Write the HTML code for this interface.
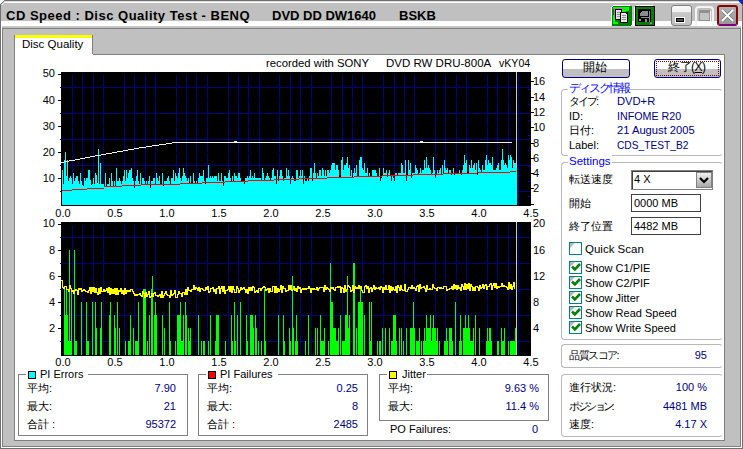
<!DOCTYPE html>
<html><head><meta charset="utf-8">
<style>
*{margin:0;padding:0;box-sizing:border-box}
html,body{width:743px;height:449px;overflow:hidden;background:#fff}
body{position:relative;font-family:"Liberation Sans",sans-serif;font-size:11px;color:#000}
.a{position:absolute}
.t{position:absolute;white-space:nowrap;line-height:13px}
.tb{position:absolute;white-space:nowrap;font-weight:bold;font-size:13px;line-height:15px;top:8px}
.grp{position:absolute;border:1px solid #b8b8b8;border-right-color:transparent;border-radius:4px}
.gbox{position:absolute;border:1px solid #808080}
.gt{position:absolute;background:#fff;padding:0 1px;color:#0000ff;line-height:13px;white-space:nowrap;font-size:11.5px}
.lab{position:absolute;white-space:nowrap;line-height:13px}
.val{position:absolute;white-space:nowrap;line-height:13px;color:#000080}
.r{text-align:right}
.chk{position:absolute;width:13px;height:13px;border:1px solid #008080;background:#fff;overflow:hidden}
.chk:before{content:"";position:absolute;left:0;top:0;border-style:solid;border-width:5px 5px 0 0;border-color:#b8b8b8 transparent transparent transparent}
.chk svg{position:absolute;left:1px;top:1px}
.txtbox{position:absolute;border:1px solid #404040;background:#fff;line-height:16px;padding-left:2px}
svg{position:absolute;display:block}
.btn{position:absolute;border:1px solid #00007f;border-radius:3px;background:linear-gradient(#fff 0,#fff 50%,#c0c0c0 52%,#c0c0c0 100%)}
</style></head><body>
<!-- window frame -->
<div class="a" style="left:0;top:0;width:743px;height:449px;background:#c0c0c0;border:1px solid #707070;clip-path:polygon(5px 0,738px 0,743px 5px,743px 449px,0 449px,0 5px)"></div>
<div class="a" style="left:4px;top:1px;width:735px;height:1px;background:#dcdcdc"></div><div class="a" style="left:4px;top:2px;width:735px;height:1px;background:#fff"></div>
<svg style="left:0;top:0" width="743" height="8" viewBox="0 0 743 8" shape-rendering="crispEdges"><path d="M0 5L5 0" stroke="#707070" stroke-width="1.4"/><path d="M738 0L743 5" stroke="#707070" stroke-width="1.4"/><path d="M2 5L5 2" stroke="#f4f4f4" stroke-width="1.4"/></svg>
<svg style="left:737px;top:0" width="6" height="6" viewBox="0 0 6 6"><path d="M1 0H6V5Z" fill="#0020d0"/></svg>
<!-- white strip -->
<div class="a" style="left:1px;top:21px;width:741px;height:5px;background:#fff"></div>
<div class="a" style="left:1px;top:26px;width:741px;height:1px;background:#cacaca"></div>
<!-- client frame -->
<div class="a" style="left:1px;top:26px;width:741px;height:422px;border-left:1px solid #fff;border-right:1px solid #fff;border-bottom:1px solid #fff"></div>
<div class="a" style="left:2px;top:28px;width:739px;height:419px;border:1px solid #808080;background:#c0c0c0"></div>

<div class="tb" style="left:6px;letter-spacing:0.5px">CD Speed : Disc Quality Test - BENQ</div>
<div class="tb" style="left:272px">DVD DD DW1640</div>
<div class="tb" style="left:399px">BSKB</div>

<!-- title icons -->
<svg style="left:611px;top:5px" width="21" height="21" viewBox="0 0 21 21" shape-rendering="crispEdges">
<path d="M2 0h17v1h-17zM0 2h1v17h-1zM1 1h1v1h-1z" fill="#fff"/>
<rect x="1" y="1" width="20" height="20" rx="2" fill="#008000"/>
<path d="M2 2h16v4h-3v2h-2v2h-9zM2 10h2v7h3v2h-5z" fill="#00ff00"/>
<path d="M3 3h11v1h-10v9h-1z" fill="#a080a0"/>
<path d="M4 4h6l1 1v10h-7z" fill="#000"/><path d="M5 5h5v9h-5z" fill="#e0e0e0"/>
<path d="M6 7h3M6 9h3M6 11h3" stroke="#909090" stroke-width="1"/>
<path d="M9 7h7l1 1v10h-8z" fill="#000"/><path d="M10 8h5v1h1v8h-6z" fill="#e8e8e8"/>
<path d="M11 10.5h4M11 12.5h4M11 14.5h4" stroke="#909090" stroke-width="1"/>
</svg>
<svg style="left:634px;top:5px" width="21" height="21" viewBox="0 0 21 21" shape-rendering="crispEdges">
<path d="M2 0h17v1h-17zM0 2h1v17h-1z" fill="#fff"/>
<rect x="1" y="1" width="20" height="20" rx="1" fill="#000"/>
<rect x="2" y="2" width="18" height="18" fill="#008000"/>
<rect x="4" y="4" width="13" height="13" fill="#000"/>
<path d="M8 6h6v5h-8v-3z" fill="#8c8c8c"/>
<path d="M7 12h8v1h-8z" fill="#8c8c8c"/><path d="M15 6h1v11h-1z" fill="#8c8c8c"/>
<path d="M5 14h2v2h-2zM11 14h2v3h-2z" fill="#8c8c8c"/><path d="M16 17h2v2h-2z" fill="#8c8c8c"/>
</svg>
<!-- min/max/close -->
<div class="a" style="left:671px;top:5px;width:21px;height:21px;border:1px solid #808080;border-radius:3px;background:linear-gradient(#f8f8f8 0,#f0f0f0 30%,#c8c8c8 35%,#c0c0c0 100%)"></div>
<div class="a" style="left:676px;top:18px;width:8px;height:4px;background:#505050;border:1px solid #000;box-shadow:0 0 0 1px #fff"></div>
<div class="a" style="left:695px;top:6px;width:19px;height:20px;border:2px solid #f4f4f4;border-radius:4px 4px 0 0;border-bottom:none"></div>
<div class="a" style="left:699px;top:10px;width:11px;height:11px;border:1px solid #909090;border-top-width:3px;background:#c4c4c4;box-shadow:1px 1px 0 #fff"></div>
<div class="a" style="left:717px;top:5px;width:21px;height:21px;border:2px solid #8b0000;border-bottom-color:#800080;border-radius:3px;background:linear-gradient(#b0b0b0 0,#999 100%)"></div>
<svg style="left:719px;top:7px" width="17" height="17" viewBox="0 0 17 17"><path d="M3.5 3.5L13.5 13.5M13.5 3.5L3.5 13.5" stroke="#333" stroke-width="2.8"/><path d="M3 3L14 14M14 3L3 14" stroke="#fff" stroke-width="2.2"/></svg>

<!-- tab -->
<div class="a" style="left:14px;top:35px;width:79px;height:20px;background:#fff;border-right:1px solid #808080;border-left:1px solid #808080"></div>
<div class="a" style="left:15px;top:35px;width:77px;height:3px;background:#ffff00"></div>
<div class="t" style="left:22px;top:38px;font-size:11.5px">Disc Quality</div>
<!-- tab content -->
<div class="a" style="left:14px;top:54px;width:711px;height:387px;background:#fff;border:1px solid #808080;border-top:none"></div>
<div class="a" style="left:93px;top:54px;width:632px;height:1px;background:#808080"></div>

<div class="t" style="left:266px;top:57px;font-size:11.3px">recorded with SONY</div>
<div class="t" style="left:386px;top:57px;font-size:11.5px">DVD RW DRU-800A</div>
<div class="t" style="left:499px;top:57px;font-size:10.6px">vKY04</div>

<svg class="a" style="left:0;top:0" width="743" height="449" viewBox="0 0 743 449"><rect x="61" y="72" width="470" height="133" fill="#000"/><path d="M72.5 74V205 M82.5 74V205 M93.5 74V205 M103.5 74V205 M124.5 74V205 M134.5 74V205 M145.5 74V205 M155.5 74V205 M176.5 74V205 M186.5 74V205 M196.5 74V205 M207.5 74V205 M228.5 74V205 M238.5 74V205 M248.5 74V205 M259.5 74V205 M279.5 74V205 M290.5 74V205 M300.5 74V205 M311.5 74V205 M331.5 74V205 M342.5 74V205 M352.5 74V205 M362.5 74V205 M383.5 74V205 M394.5 74V205 M404.5 74V205 M414.5 74V205 M435.5 74V205 M445.5 74V205 M456.5 74V205 M466.5 74V205 M487.5 74V205 M497.5 74V205 M508.5 74V205 M518.5 74V205 M60 191.5H531 M60 165.5H531 M60 139.5H531 M60 113.5H531 M60 87.5H531" stroke="#000080" stroke-width="1" fill="none"/><path d="M61 178.5H531 M61 152.5H531 M61 126.5H531 M61 100.5H531 M61 74.5H531" stroke="#000" stroke-width="1" fill="none"/><rect x="516" y="72" width="1" height="133" fill="#c8c8c8"/><path d="M62 205V170H63V184H64V160H65V152H66V176H67V160H68V181H69V178H70V176H71V178H72V184H73V173H74V181H75V178H76V176H77V176H78V181H79V184H80V173H81V181H82V185H83V186H84V178H85V181H86V178H87V178H88V170H89V170H90V180H91V185H92V184H93V178H94V184H95V173H96V175H97V183H98V149H99V184H100V163H101V184H102V184H103V184H104V186H105V173H106V186H107V184H108V184H109V178H110V186H111V173H112V181H113V186H114V181H115V186H116V168H117V181H118V181H119V178H120V181H121V184H122V181H123V176H124V170H125V181H126V170H127V178H128V173H129V170H130V170H131V168H132V178H133V181H134V188H135V181H136V176H137V170H138V181H139V184H140V173H141V185H142V178H143V178H144V181H145V184H146V181H147V184H148V181H149V176H150V188H151V181H152V181H153V178H154V178H155V184H156V173H157V178H158V181H159V176H160V185H161V185H162V173H163V186H164V181H165V181H166V181H167V178H168V176H169V181H170V184H171V178H172V178H173V170H174V181H175V173H176V176H177V178H178V173H179V168H180V178H181V181H182V176H183V168H184V173H185V176H186V178H187V181H188V178H189V184H190V176H191V184H192V184H193V173H194V181H195V184H196V181H197V184H198V178H199V173H200V176H201V176H202V176H203V170H204V181H205V184H206V178H207V178H208V165H209V178H210V176H211V178H212V176H213V178H214V176H215V176H216V176H217V181H218V173H219V181H220V181H221V173H222V181H223V186H224V176H225V176H226V178H227V178H228V173H229V170H230V178H231V181H232V176H233V181H234V173H235V176H236V176H237V178H238V173H239V173H240V178H241V181H242V181H243V181H244V184H245V178H246V178H247V176H248V178H249V176H250V170H251V178H252V176H253V178H254V173H255V178H256V178H257V178H258V178H259V178H260V178H261V181H262V168H263V173H264V181H265V178H266V176H267V173H268V176H269V178H270V181H271V178H272V170H273V168H274V176H275V176H276V184H277V170H278V181H279V176H280V170H281V170H282V176H283V181H284V178H285V178H286V168H287V176H288V170H289V176H290V184H291V178H292V176H293V178H294V181H295V181H296V170H297V170H298V178H299V176H300V170H301V176H302V170H303V184H304V176H305V181H306V181H307V178H308V181H309V176H310V168H311V168H312V181H313V173H314V163H315V173H316V178H317V173H318V176H319V170H320V170H321V176H322V168H323V170H324V176H325V170H326V176H327V170H328V170H329V173H330V170H331V165H332V163H333V163H334V163H335V170H336V165H337V165H338V170H339V177H340V177H341V160H342V157H343V170H344V165H345V165H346V163H347V157H348V168H349V165H350V176H351V170H352V177H353V173H354V168H355V173H356V165H357V177H358V177H359V160H360V157H361V157H362V168H363V170H364V163H365V173H366V173H367V168H368V176H369V173H370V177H371V177H372V170H373V170H374V170H375V170H376V173H377V176H378V177H379V168H380V181H381V178H382V176H383V168H384V173H385V173H386V170H387V177H388V173H389V170H390V176H391V181H392V176H393V178H394V181H395V173H396V173H397V175H398V173H399V173H400V173H401V163H402V165H403V173H404V173H405V160H406V181H407V175H408V160H409V170H410V163H411V178H412V173H413V173H414V173H415V165H416V168H417V170H418V175H419V173H420V168H421V173H422V170H423V170H424V160H425V168H426V157H427V168H428V165H429V168H430V170H431V175H432V173H433V157H434V170H435V178H436V175H437V170H438V173H439V170H440V168H441V175H442V165H443V173H444V160H445V168H446V170H447V168H448V173H449V170H450V170H451V175H452V173H453V168H454V175H455V173H456V173H457V173H458V173H459V170H460V173H461V175H462V170H463V165H464V155H465V163H466V160H467V173H468V173H469V165H470V168H471V160H472V168H473V165H474V163H475V170H476V163H477V175H478V160H479V168H480V170H481V173H482V165H483V170H484V170H485V160H486V155H487V165H488V160H489V163H490V163H491V165H492V157H493V170H494V170H495V170H496V168H497V165H498V163H499V170H500V170H501V160H502V149H503V160H504V165H505V163H506V165H507V168H508V155H509V160H510V155H511V157H512V168H513V160H514V163H515V163H516V168H517V205Z" fill="#00ffff"/><path d="M62 190H72v1H62ZM72 189H87v1H72ZM87 188H104v1H87ZM104 186H122v1H104ZM122 185H141v1H122ZM141 184H180v1H141ZM180 183H202v1H180ZM202 182H225v1H202ZM225 181H248v1H225ZM248 180H274v1H248ZM274 179H299v1H274ZM299 178H327v1H299ZM327 177H354v1H327ZM354 176H382v1H354ZM382 175H413v1H382ZM413 174H443v1H413ZM443 173H477v1H443ZM477 172H510v1H477ZM510 171H516v1H510Z" fill="#ff0000"/><path d="M61 162h1v1h-1ZM62 162h1v1h-1ZM63 162h1v1h-1ZM64 161h1v1h-1ZM65 161h1v1h-1ZM66 161h1v1h-1ZM67 161h1v1h-1ZM68 161h1v1h-1ZM69 160h1v1h-1ZM70 160h1v1h-1ZM71 160h1v1h-1ZM72 160h1v1h-1ZM73 160h1v1h-1ZM74 160h1v1h-1ZM75 159h1v1h-1ZM76 159h1v1h-1ZM77 159h1v1h-1ZM78 159h1v1h-1ZM79 159h1v1h-1ZM80 158h1v1h-1ZM81 158h1v1h-1ZM82 158h1v1h-1ZM83 158h1v1h-1ZM84 158h1v1h-1ZM85 157h1v1h-1ZM86 157h1v1h-1ZM87 157h1v1h-1ZM88 157h1v1h-1ZM89 157h1v1h-1ZM90 156h1v1h-1ZM91 156h1v1h-1ZM92 156h1v1h-1ZM93 156h1v1h-1ZM94 156h1v1h-1ZM95 155h1v1h-1ZM96 155h1v1h-1ZM97 155h1v1h-1ZM98 155h1v1h-1ZM99 155h1v1h-1ZM100 155h1v1h-1ZM101 154h1v1h-1ZM102 154h1v1h-1ZM103 154h1v1h-1ZM104 154h1v1h-1ZM105 154h1v1h-1ZM106 153h1v1h-1ZM107 153h1v1h-1ZM108 153h1v1h-1ZM109 153h1v1h-1ZM110 153h1v1h-1ZM111 153h1v1h-1ZM112 152h1v1h-1ZM113 152h1v1h-1ZM114 152h1v1h-1ZM115 152h1v1h-1ZM116 152h1v1h-1ZM117 151h1v1h-1ZM118 151h1v1h-1ZM119 151h1v1h-1ZM120 151h1v1h-1ZM121 151h1v1h-1ZM122 151h1v1h-1ZM123 150h1v1h-1ZM124 150h1v1h-1ZM125 150h1v1h-1ZM126 150h1v1h-1ZM127 150h1v1h-1ZM128 149h1v1h-1ZM129 149h1v1h-1ZM130 149h1v1h-1ZM131 149h1v1h-1ZM132 149h1v1h-1ZM133 149h1v1h-1ZM134 148h1v1h-1ZM135 148h1v1h-1ZM136 148h1v1h-1ZM137 148h1v1h-1ZM138 148h1v1h-1ZM139 147h1v1h-1ZM140 147h1v1h-1ZM141 147h1v1h-1ZM142 147h1v1h-1ZM143 147h1v1h-1ZM144 147h1v1h-1ZM145 147h1v1h-1ZM146 146h1v1h-1ZM147 146h1v1h-1ZM148 146h1v1h-1ZM149 146h1v1h-1ZM150 146h1v1h-1ZM151 146h1v1h-1ZM152 145h1v1h-1ZM153 145h1v1h-1ZM154 145h1v1h-1ZM155 145h1v1h-1ZM156 145h1v1h-1ZM157 145h1v1h-1ZM158 145h1v1h-1ZM159 144h1v1h-1ZM160 144h1v1h-1ZM161 144h1v1h-1ZM162 144h1v1h-1ZM163 144h1v1h-1ZM164 144h1v1h-1ZM165 144h1v1h-1ZM166 143h1v1h-1ZM167 143h1v1h-1ZM168 143h1v1h-1ZM169 143h1v1h-1ZM170 143h1v1h-1ZM171 143h1v1h-1ZM172 142h1v1h-1ZM173 142h1v1h-1ZM174 142h1v1h-1ZM175 142h1v1h-1ZM176 142h1v1h-1ZM177 142h1v1h-1ZM178 142h1v1h-1ZM179 142h1v1h-1ZM180 142h1v1h-1ZM181 142h1v1h-1ZM182 142h1v1h-1ZM183 142h1v1h-1ZM184 142h1v1h-1ZM185 142h1v1h-1ZM186 142h1v1h-1ZM187 142h1v1h-1ZM188 142h1v1h-1ZM189 142h1v1h-1ZM190 142h1v1h-1ZM191 142h1v1h-1ZM192 142h1v1h-1ZM193 142h1v1h-1ZM194 142h1v1h-1ZM195 142h1v1h-1ZM196 142h1v1h-1ZM197 142h1v1h-1ZM198 142h1v1h-1ZM199 142h1v1h-1ZM200 142h1v1h-1ZM201 142h1v1h-1ZM202 142h1v1h-1ZM203 142h1v1h-1ZM204 142h1v1h-1ZM205 142h1v1h-1ZM206 142h1v1h-1ZM207 142h1v1h-1ZM208 142h1v1h-1ZM209 142h1v1h-1ZM210 142h1v1h-1ZM211 142h1v1h-1ZM212 142h1v1h-1ZM213 142h1v1h-1ZM214 142h1v1h-1ZM215 142h1v1h-1ZM216 142h1v1h-1ZM217 142h1v1h-1ZM218 142h1v1h-1ZM219 142h1v1h-1ZM220 142h1v1h-1ZM221 142h1v1h-1ZM222 142h1v1h-1ZM223 142h1v1h-1ZM224 142h1v1h-1ZM225 142h1v1h-1ZM226 142h1v1h-1ZM227 142h1v1h-1ZM228 142h1v1h-1ZM229 142h1v1h-1ZM230 142h1v1h-1ZM231 142h1v1h-1ZM232 142h1v1h-1ZM233 142h1v1h-1ZM234 142h1v1h-1ZM235 142h1v1h-1ZM236 142h1v1h-1ZM237 142h1v1h-1ZM238 142h1v1h-1ZM239 142h1v1h-1ZM240 142h1v1h-1ZM241 142h1v1h-1ZM242 142h1v1h-1ZM243 142h1v1h-1ZM244 142h1v1h-1ZM245 142h1v1h-1ZM246 142h1v1h-1ZM247 142h1v1h-1ZM248 142h1v1h-1ZM249 142h1v1h-1ZM250 142h1v1h-1ZM251 142h1v1h-1ZM252 142h1v1h-1ZM253 142h1v1h-1ZM254 142h1v1h-1ZM255 142h1v1h-1ZM256 142h1v1h-1ZM257 142h1v1h-1ZM258 142h1v1h-1ZM259 142h1v1h-1ZM260 142h1v1h-1ZM261 142h1v1h-1ZM262 142h1v1h-1ZM263 142h1v1h-1ZM264 142h1v1h-1ZM265 142h1v1h-1ZM266 142h1v1h-1ZM267 142h1v1h-1ZM268 142h1v1h-1ZM269 142h1v1h-1ZM270 142h1v1h-1ZM271 142h1v1h-1ZM272 142h1v1h-1ZM273 142h1v1h-1ZM274 142h1v1h-1ZM275 142h1v1h-1ZM276 142h1v1h-1ZM277 142h1v1h-1ZM278 142h1v1h-1ZM279 142h1v1h-1ZM280 142h1v1h-1ZM281 142h1v1h-1ZM282 142h1v1h-1ZM283 142h1v1h-1ZM284 142h1v1h-1ZM285 142h1v1h-1ZM286 142h1v1h-1ZM287 142h1v1h-1ZM288 142h1v1h-1ZM289 142h1v1h-1ZM290 142h1v1h-1ZM291 142h1v1h-1ZM292 142h1v1h-1ZM293 142h1v1h-1ZM294 142h1v1h-1ZM295 142h1v1h-1ZM296 142h1v1h-1ZM297 142h1v1h-1ZM298 142h1v1h-1ZM299 142h1v1h-1ZM300 142h1v1h-1ZM301 142h1v1h-1ZM302 142h1v1h-1ZM303 142h1v1h-1ZM304 142h1v1h-1ZM305 142h1v1h-1ZM306 142h1v1h-1ZM307 142h1v1h-1ZM308 142h1v1h-1ZM309 142h1v1h-1ZM310 142h1v1h-1ZM311 142h1v1h-1ZM312 142h1v1h-1ZM313 142h1v1h-1ZM314 142h1v1h-1ZM315 142h1v1h-1ZM316 142h1v1h-1ZM317 142h1v1h-1ZM318 142h1v1h-1ZM319 142h1v1h-1ZM320 142h1v1h-1ZM321 142h1v1h-1ZM322 142h1v1h-1ZM323 142h1v1h-1ZM324 142h1v1h-1ZM325 142h1v1h-1ZM326 142h1v1h-1ZM327 142h1v1h-1ZM328 142h1v1h-1ZM329 142h1v1h-1ZM330 142h1v1h-1ZM331 142h1v1h-1ZM332 142h1v1h-1ZM333 142h1v1h-1ZM334 142h1v1h-1ZM335 142h1v1h-1ZM336 142h1v1h-1ZM337 142h1v1h-1ZM338 142h1v1h-1ZM339 142h1v1h-1ZM340 142h1v1h-1ZM341 142h1v1h-1ZM342 142h1v1h-1ZM343 142h1v1h-1ZM344 142h1v1h-1ZM345 142h1v1h-1ZM346 142h1v1h-1ZM347 142h1v1h-1ZM348 142h1v1h-1ZM349 142h1v1h-1ZM350 142h1v1h-1ZM351 142h1v1h-1ZM352 142h1v1h-1ZM353 142h1v1h-1ZM354 142h1v1h-1ZM355 142h1v1h-1ZM356 142h1v1h-1ZM357 142h1v1h-1ZM358 142h1v1h-1ZM359 142h1v1h-1ZM360 142h1v1h-1ZM361 142h1v1h-1ZM362 142h1v1h-1ZM363 142h1v1h-1ZM364 142h1v1h-1ZM365 142h1v1h-1ZM366 142h1v1h-1ZM367 142h1v1h-1ZM368 142h1v1h-1ZM369 142h1v1h-1ZM370 142h1v1h-1ZM371 142h1v1h-1ZM372 142h1v1h-1ZM373 142h1v1h-1ZM374 142h1v1h-1ZM375 142h1v1h-1ZM376 142h1v1h-1ZM377 142h1v1h-1ZM378 142h1v1h-1ZM379 142h1v1h-1ZM380 142h1v1h-1ZM381 142h1v1h-1ZM382 142h1v1h-1ZM383 142h1v1h-1ZM384 142h1v1h-1ZM385 142h1v1h-1ZM386 142h1v1h-1ZM387 142h1v1h-1ZM388 142h1v1h-1ZM389 142h1v1h-1ZM390 142h1v1h-1ZM391 142h1v1h-1ZM392 142h1v1h-1ZM393 142h1v1h-1ZM394 142h1v1h-1ZM395 142h1v1h-1ZM396 142h1v1h-1ZM397 142h1v1h-1ZM398 142h1v1h-1ZM399 142h1v1h-1ZM400 142h1v1h-1ZM401 142h1v1h-1ZM402 142h1v1h-1ZM403 142h1v1h-1ZM404 142h1v1h-1ZM405 142h1v1h-1ZM406 142h1v1h-1ZM407 142h1v1h-1ZM408 142h1v1h-1ZM409 142h1v1h-1ZM410 142h1v1h-1ZM411 142h1v1h-1ZM412 142h1v1h-1ZM413 142h1v1h-1ZM414 142h1v1h-1ZM415 142h1v1h-1ZM416 142h1v1h-1ZM417 142h1v1h-1ZM418 142h1v1h-1ZM419 142h1v1h-1ZM420 142h1v1h-1ZM421 142h1v1h-1ZM422 142h1v1h-1ZM423 142h1v1h-1ZM424 142h1v1h-1ZM425 142h1v1h-1ZM426 142h1v1h-1ZM427 142h1v1h-1ZM428 142h1v1h-1ZM429 142h1v1h-1ZM430 142h1v1h-1ZM431 142h1v1h-1ZM432 142h1v1h-1ZM433 142h1v1h-1ZM434 142h1v1h-1ZM435 142h1v1h-1ZM436 142h1v1h-1ZM437 142h1v1h-1ZM438 142h1v1h-1ZM439 142h1v1h-1ZM440 142h1v1h-1ZM441 142h1v1h-1ZM442 142h1v1h-1ZM443 142h1v1h-1ZM444 142h1v1h-1ZM445 142h1v1h-1ZM446 142h1v1h-1ZM447 142h1v1h-1ZM448 142h1v1h-1ZM449 142h1v1h-1ZM450 142h1v1h-1ZM451 142h1v1h-1ZM452 142h1v1h-1ZM453 142h1v1h-1ZM454 142h1v1h-1ZM455 142h1v1h-1ZM456 142h1v1h-1ZM457 142h1v1h-1ZM458 142h1v1h-1ZM459 142h1v1h-1ZM460 142h1v1h-1ZM461 142h1v1h-1ZM462 142h1v1h-1ZM463 142h1v1h-1ZM464 142h1v1h-1ZM465 142h1v1h-1ZM466 142h1v1h-1ZM467 142h1v1h-1ZM468 142h1v1h-1ZM469 142h1v1h-1ZM470 142h1v1h-1ZM471 142h1v1h-1ZM472 142h1v1h-1ZM473 142h1v1h-1ZM474 142h1v1h-1ZM475 142h1v1h-1ZM476 142h1v1h-1ZM477 142h1v1h-1ZM478 142h1v1h-1ZM479 142h1v1h-1ZM480 142h1v1h-1ZM481 142h1v1h-1ZM482 142h1v1h-1ZM483 142h1v1h-1ZM484 142h1v1h-1ZM485 142h1v1h-1ZM486 142h1v1h-1ZM487 142h1v1h-1ZM488 142h1v1h-1ZM489 142h1v1h-1ZM490 142h1v1h-1ZM491 142h1v1h-1ZM492 142h1v1h-1ZM493 142h1v1h-1ZM494 142h1v1h-1ZM495 142h1v1h-1ZM496 142h1v1h-1ZM497 142h1v1h-1ZM498 142h1v1h-1ZM499 142h1v1h-1ZM500 142h1v1h-1ZM501 142h1v1h-1ZM502 142h1v1h-1ZM503 142h1v1h-1ZM504 142h1v1h-1ZM505 142h1v1h-1ZM506 142h1v1h-1ZM507 142h1v1h-1ZM508 142h1v1h-1ZM509 142h1v1h-1ZM510 142h1v1h-1ZM511 142h1v1h-1ZM234 141h3v1h-3ZM420 141h3v1h-3Z" fill="#f0f0f0"/><rect x="61" y="205" width="470" height="1" fill="#000"/><path d="M58 178.5H61 M58 152.5H61 M58 126.5H61 M58 100.5H61 M58 74.5H61 M531 204.5H534 M531 188.5H534 M531 173.5H534 M531 158.5H534 M531 143.5H534 M531 127.5H534 M531 112.5H534 M531 97.5H534 M531 81.5H534" stroke="#000" stroke-width="1"/><path d="M528 196.5H531 M528 181.5H531 M528 166.5H531 M528 150.5H531 M528 135.5H531 M528 120.5H531 M528 104.5H531 M528 89.5H531" stroke="#0000c0" stroke-width="1"/><text x="55" y="182" text-anchor="end" font-family="Liberation Sans" font-size="11">10</text><text x="55" y="156" text-anchor="end" font-family="Liberation Sans" font-size="11">20</text><text x="55" y="130" text-anchor="end" font-family="Liberation Sans" font-size="11">30</text><text x="55" y="104" text-anchor="end" font-family="Liberation Sans" font-size="11">40</text><text x="55" y="77" text-anchor="end" font-family="Liberation Sans" font-size="11">50</text><text x="533" y="192" font-family="Liberation Sans" font-size="11">2</text><text x="533" y="177" font-family="Liberation Sans" font-size="11">4</text><text x="533" y="162" font-family="Liberation Sans" font-size="11">6</text><text x="533" y="147" font-family="Liberation Sans" font-size="11">8</text><text x="533" y="131" font-family="Liberation Sans" font-size="11">10</text><text x="533" y="116" font-family="Liberation Sans" font-size="11">12</text><text x="533" y="101" font-family="Liberation Sans" font-size="11">14</text><text x="533" y="85" font-family="Liberation Sans" font-size="11">16</text><text x="63.0" y="216.5" text-anchor="middle" font-family="Liberation Sans" font-size="11">0.0</text><text x="115.0" y="216.5" text-anchor="middle" font-family="Liberation Sans" font-size="11">0.5</text><text x="167.0" y="216.5" text-anchor="middle" font-family="Liberation Sans" font-size="11">1.0</text><text x="219.0" y="216.5" text-anchor="middle" font-family="Liberation Sans" font-size="11">1.5</text><text x="271.0" y="216.5" text-anchor="middle" font-family="Liberation Sans" font-size="11">2.0</text><text x="323.0" y="216.5" text-anchor="middle" font-family="Liberation Sans" font-size="11">2.5</text><text x="375.0" y="216.5" text-anchor="middle" font-family="Liberation Sans" font-size="11">3.0</text><text x="427.0" y="216.5" text-anchor="middle" font-family="Liberation Sans" font-size="11">3.5</text><text x="479.0" y="216.5" text-anchor="middle" font-family="Liberation Sans" font-size="11">4.0</text><text x="531.0" y="216.5" text-anchor="middle" font-family="Liberation Sans" font-size="11">4.5</text><rect x="61" y="222" width="470" height="133" fill="#000"/><path d="M72.5 224V355 M82.5 224V355 M93.5 224V355 M103.5 224V355 M124.5 224V355 M134.5 224V355 M145.5 224V355 M155.5 224V355 M176.5 224V355 M186.5 224V355 M196.5 224V355 M207.5 224V355 M228.5 224V355 M238.5 224V355 M248.5 224V355 M259.5 224V355 M279.5 224V355 M290.5 224V355 M300.5 224V355 M311.5 224V355 M331.5 224V355 M342.5 224V355 M352.5 224V355 M362.5 224V355 M383.5 224V355 M394.5 224V355 M404.5 224V355 M414.5 224V355 M435.5 224V355 M445.5 224V355 M456.5 224V355 M466.5 224V355 M487.5 224V355 M497.5 224V355 M508.5 224V355 M518.5 224V355 M60 341.5H531 M60 315.5H531 M60 289.5H531 M60 263.5H531 M60 237.5H531" stroke="#000080" stroke-width="1" fill="none"/><path d="M61 328.5H531 M61 302.5H531 M61 276.5H531 M61 250.5H531 M61 224.5H531" stroke="#000" stroke-width="1" fill="none"/><path d="M64 289h1V355h-1ZM65 315h1V355h-1ZM66 289h1V355h-1ZM67 315h1V355h-1ZM68 341h1V355h-1ZM69 250h1V355h-1ZM70 341h1V355h-1ZM71 289h1V355h-1ZM74 250h1V355h-1ZM75 341h1V355h-1ZM76 341h1V355h-1ZM81 302h1V355h-1ZM86 302h1V355h-1ZM87 341h1V355h-1ZM88 341h1V355h-1ZM92 302h1V355h-1ZM95 302h1V355h-1ZM96 328h1V355h-1ZM100 328h1V355h-1ZM101 302h1V355h-1ZM109 315h1V355h-1ZM110 302h1V355h-1ZM114 315h1V355h-1ZM115 328h1V355h-1ZM117 302h1V355h-1ZM119 328h1V355h-1ZM125 341h1V355h-1ZM128 341h1V355h-1ZM129 341h1V355h-1ZM130 315h1V355h-1ZM133 328h1V355h-1ZM135 341h1V355h-1ZM136 341h1V355h-1ZM137 341h1V355h-1ZM138 302h1V355h-1ZM143 289h1V355h-1ZM144 289h1V355h-1ZM145 289h1V355h-1ZM147 341h1V355h-1ZM149 315h1V355h-1ZM151 289h1V355h-1ZM152 276h1V355h-1ZM154 315h1V355h-1ZM155 302h1V355h-1ZM156 315h1V355h-1ZM162 315h1V355h-1ZM164 328h1V355h-1ZM169 302h1V355h-1ZM170 341h1V355h-1ZM175 341h1V355h-1ZM177 315h1V355h-1ZM178 315h1V355h-1ZM179 315h1V355h-1ZM180 302h1V355h-1ZM181 341h1V355h-1ZM182 341h1V355h-1ZM183 315h1V355h-1ZM185 302h1V355h-1ZM186 315h1V355h-1ZM188 328h1V355h-1ZM189 341h1V355h-1ZM190 328h1V355h-1ZM198 315h1V355h-1ZM201 341h1V355h-1ZM203 341h1V355h-1ZM204 341h1V355h-1ZM208 341h1V355h-1ZM210 315h1V355h-1ZM215 341h1V355h-1ZM216 315h1V355h-1ZM217 315h1V355h-1ZM218 315h1V355h-1ZM225 341h1V355h-1ZM231 315h1V355h-1ZM232 341h1V355h-1ZM234 302h1V355h-1ZM235 341h1V355h-1ZM237 315h1V355h-1ZM240 302h1V355h-1ZM246 315h1V355h-1ZM247 341h1V355h-1ZM250 315h1V355h-1ZM251 315h1V355h-1ZM252 315h1V355h-1ZM253 328h1V355h-1ZM255 315h1V355h-1ZM256 328h1V355h-1ZM258 341h1V355h-1ZM261 341h1V355h-1ZM264 289h1V355h-1ZM265 341h1V355h-1ZM278 315h1V355h-1ZM283 315h1V355h-1ZM284 341h1V355h-1ZM289 328h1V355h-1ZM290 341h1V355h-1ZM292 276h1V355h-1ZM293 328h1V355h-1ZM295 341h1V355h-1ZM296 315h1V355h-1ZM297 341h1V355h-1ZM305 341h1V355h-1ZM308 315h1V355h-1ZM315 328h1V355h-1ZM317 328h1V355h-1ZM320 315h1V355h-1ZM321 341h1V355h-1ZM322 341h1V355h-1ZM323 341h1V355h-1ZM324 328h1V355h-1ZM328 341h1V355h-1ZM330 263h1V355h-1ZM331 302h1V355h-1ZM332 302h1V355h-1ZM333 328h1V355h-1ZM334 328h1V355h-1ZM335 328h1V355h-1ZM336 341h1V355h-1ZM337 341h1V355h-1ZM338 328h1V355h-1ZM340 315h1V355h-1ZM342 341h1V355h-1ZM343 341h1V355h-1ZM344 341h1V355h-1ZM345 315h1V355h-1ZM346 315h1V355h-1ZM347 276h1V355h-1ZM348 328h1V355h-1ZM349 315h1V355h-1ZM353 263h1V355h-1ZM354 263h1V355h-1ZM356 328h1V355h-1ZM358 302h1V355h-1ZM359 302h1V355h-1ZM360 289h1V355h-1ZM361 302h1V355h-1ZM362 302h1V355h-1ZM364 315h1V355h-1ZM369 302h1V355h-1ZM370 341h1V355h-1ZM371 302h1V355h-1ZM377 341h1V355h-1ZM379 341h1V355h-1ZM380 341h1V355h-1ZM382 328h1V355h-1ZM385 328h1V355h-1ZM389 328h1V355h-1ZM391 341h1V355h-1ZM392 341h1V355h-1ZM393 315h1V355h-1ZM394 315h1V355h-1ZM395 315h1V355h-1ZM396 341h1V355h-1ZM399 328h1V355h-1ZM401 328h1V355h-1ZM403 341h1V355h-1ZM406 328h1V355h-1ZM410 328h1V355h-1ZM411 328h1V355h-1ZM412 328h1V355h-1ZM413 302h1V355h-1ZM414 328h1V355h-1ZM416 341h1V355h-1ZM417 341h1V355h-1ZM418 341h1V355h-1ZM419 328h1V355h-1ZM421 341h1V355h-1ZM423 341h1V355h-1ZM424 328h1V355h-1ZM425 341h1V355h-1ZM426 315h1V355h-1ZM427 328h1V355h-1ZM428 328h1V355h-1ZM429 328h1V355h-1ZM430 315h1V355h-1ZM431 341h1V355h-1ZM432 328h1V355h-1ZM433 315h1V355h-1ZM434 328h1V355h-1ZM435 328h1V355h-1ZM436 341h1V355h-1ZM437 328h1V355h-1ZM439 341h1V355h-1ZM444 341h1V355h-1ZM445 341h1V355h-1ZM446 328h1V355h-1ZM447 341h1V355h-1ZM449 328h1V355h-1ZM450 328h1V355h-1ZM451 328h1V355h-1ZM452 341h1V355h-1ZM455 302h1V355h-1ZM459 341h1V355h-1ZM460 315h1V355h-1ZM461 341h1V355h-1ZM463 328h1V355h-1ZM464 328h1V355h-1ZM465 315h1V355h-1ZM466 328h1V355h-1ZM467 328h1V355h-1ZM468 315h1V355h-1ZM469 328h1V355h-1ZM470 341h1V355h-1ZM471 341h1V355h-1ZM472 341h1V355h-1ZM473 328h1V355h-1ZM475 315h1V355h-1ZM479 328h1V355h-1ZM486 341h1V355h-1ZM487 328h1V355h-1ZM488 341h1V355h-1ZM489 328h1V355h-1ZM490 328h1V355h-1ZM491 341h1V355h-1ZM497 341h1V355h-1ZM498 341h1V355h-1ZM501 328h1V355h-1ZM502 341h1V355h-1ZM503 341h1V355h-1ZM504 328h1V355h-1ZM508 341h1V355h-1ZM510 341h1V355h-1ZM511 341h1V355h-1ZM512 341h1V355h-1ZM513 341h1V355h-1ZM514 341h1V355h-1ZM515 328h1V355h-1Z" fill="#00ff00"/><path d="M61 280h1V281h-1ZM62 280h1V288h-1ZM63 287h1V289h-1ZM64 286h1V289h-1ZM65 286h1V287h-1ZM66 286h1V290h-1ZM67 289h1V290h-1ZM68 289h1V292h-1ZM69 285h1V292h-1ZM70 285h1V289h-1ZM71 288h1V292h-1ZM72 290h1V292h-1ZM73 290h1V294h-1ZM74 290h1V294h-1ZM75 289h1V291h-1ZM76 289h1V291h-1ZM77 290h1V295h-1ZM78 288h1V295h-1ZM79 288h1V290h-1ZM80 288h1V290h-1ZM81 288h1V292h-1ZM82 290h1V292h-1ZM83 289h1V291h-1ZM84 289h1V291h-1ZM85 290h1V292h-1ZM86 291h1V292h-1ZM87 291h1V293h-1ZM88 290h1V293h-1ZM89 287h1V291h-1ZM90 287h1V294h-1ZM91 287h1V294h-1ZM92 287h1V292h-1ZM93 287h1V292h-1ZM94 287h1V293h-1ZM95 288h1V293h-1ZM96 288h1V293h-1ZM97 292h1V295h-1ZM98 288h1V295h-1ZM99 288h1V294h-1ZM100 287h1V294h-1ZM101 287h1V292h-1ZM102 291h1V292h-1ZM103 289h1V292h-1ZM104 289h1V292h-1ZM105 290h1V292h-1ZM106 288h1V291h-1ZM107 288h1V293h-1ZM108 287h1V293h-1ZM109 287h1V295h-1ZM110 288h1V295h-1ZM111 288h1V294h-1ZM112 289h1V294h-1ZM113 289h1V294h-1ZM114 288h1V294h-1ZM115 288h1V295h-1ZM116 288h1V295h-1ZM117 288h1V295h-1ZM118 290h1V295h-1ZM119 290h1V292h-1ZM120 288h1V292h-1ZM121 288h1V294h-1ZM122 290h1V294h-1ZM123 290h1V295h-1ZM124 288h1V295h-1ZM125 288h1V294h-1ZM126 290h1V294h-1ZM127 290h1V292h-1ZM128 290h1V292h-1ZM129 290h1V292h-1ZM130 289h1V292h-1ZM131 289h1V290h-1ZM132 289h1V292h-1ZM133 291h1V294h-1ZM134 293h1V296h-1ZM135 294h1V296h-1ZM136 294h1V296h-1ZM137 294h1V296h-1ZM138 294h1V295h-1ZM139 293h1V295h-1ZM140 293h1V296h-1ZM141 295h1V297h-1ZM142 291h1V297h-1ZM143 291h1V294h-1ZM144 293h1V298h-1ZM145 292h1V298h-1ZM146 292h1V297h-1ZM147 294h1V297h-1ZM148 291h1V295h-1ZM149 291h1V298h-1ZM150 296h1V298h-1ZM151 293h1V297h-1ZM152 293h1V297h-1ZM153 293h1V297h-1ZM154 292h1V294h-1ZM155 292h1V296h-1ZM156 295h1V296h-1ZM157 295h1V297h-1ZM158 295h1V297h-1ZM159 294h1V296h-1ZM160 294h1V298h-1ZM161 291h1V298h-1ZM162 291h1V298h-1ZM163 295h1V298h-1ZM164 293h1V296h-1ZM165 291h1V294h-1ZM166 291h1V295h-1ZM167 294h1V296h-1ZM168 295h1V296h-1ZM169 295h1V298h-1ZM170 290h1V298h-1ZM171 290h1V296h-1ZM172 294h1V296h-1ZM173 293h1V295h-1ZM174 290h1V294h-1ZM175 290h1V298h-1ZM176 297h1V298h-1ZM177 294h1V298h-1ZM178 291h1V295h-1ZM179 291h1V294h-1ZM180 293h1V294h-1ZM181 293h1V297h-1ZM182 292h1V297h-1ZM183 292h1V293h-1ZM184 292h1V295h-1ZM185 289h1V295h-1ZM186 289h1V295h-1ZM187 287h1V295h-1ZM188 287h1V291h-1ZM189 290h1V291h-1ZM190 290h1V292h-1ZM191 289h1V292h-1ZM192 289h1V290h-1ZM193 285h1V290h-1ZM194 285h1V290h-1ZM195 287h1V290h-1ZM196 287h1V289h-1ZM197 288h1V291h-1ZM198 287h1V291h-1ZM199 287h1V292h-1ZM200 288h1V292h-1ZM201 288h1V289h-1ZM202 288h1V290h-1ZM203 289h1V291h-1ZM204 290h1V291h-1ZM205 287h1V291h-1ZM206 287h1V290h-1ZM207 286h1V290h-1ZM208 286h1V293h-1ZM209 291h1V293h-1ZM210 288h1V292h-1ZM211 288h1V289h-1ZM212 287h1V289h-1ZM213 287h1V292h-1ZM214 289h1V292h-1ZM215 289h1V294h-1ZM216 288h1V294h-1ZM217 288h1V289h-1ZM218 286h1V289h-1ZM219 286h1V294h-1ZM220 288h1V294h-1ZM221 286h1V289h-1ZM222 286h1V292h-1ZM223 286h1V292h-1ZM224 286h1V294h-1ZM225 290h1V294h-1ZM226 290h1V291h-1ZM227 289h1V291h-1ZM228 286h1V290h-1ZM229 286h1V292h-1ZM230 286h1V292h-1ZM231 286h1V293h-1ZM232 286h1V293h-1ZM233 286h1V290h-1ZM234 289h1V293h-1ZM235 292h1V293h-1ZM236 286h1V293h-1ZM237 286h1V289h-1ZM238 288h1V293h-1ZM239 290h1V293h-1ZM240 287h1V291h-1ZM241 287h1V290h-1ZM242 288h1V290h-1ZM243 287h1V289h-1ZM244 287h1V290h-1ZM245 289h1V293h-1ZM246 289h1V293h-1ZM247 289h1V294h-1ZM248 287h1V294h-1ZM249 287h1V291h-1ZM250 287h1V291h-1ZM251 287h1V291h-1ZM252 286h1V291h-1ZM253 286h1V288h-1ZM254 287h1V293h-1ZM255 291h1V293h-1ZM256 290h1V292h-1ZM257 290h1V293h-1ZM258 288h1V293h-1ZM259 288h1V289h-1ZM260 288h1V291h-1ZM261 288h1V291h-1ZM262 287h1V289h-1ZM263 286h1V288h-1ZM264 286h1V288h-1ZM265 287h1V291h-1ZM266 289h1V291h-1ZM267 288h1V290h-1ZM268 288h1V293h-1ZM269 288h1V293h-1ZM270 288h1V292h-1ZM271 291h1V292h-1ZM272 286h1V292h-1ZM273 286h1V287h-1ZM274 286h1V293h-1ZM275 286h1V293h-1ZM276 286h1V293h-1ZM277 288h1V293h-1ZM278 288h1V292h-1ZM279 289h1V292h-1ZM280 285h1V290h-1ZM281 285h1V293h-1ZM282 286h1V293h-1ZM283 286h1V289h-1ZM284 288h1V289h-1ZM285 288h1V292h-1ZM286 290h1V292h-1ZM287 290h1V291h-1ZM288 285h1V291h-1ZM289 285h1V290h-1ZM290 285h1V290h-1ZM291 285h1V291h-1ZM292 289h1V291h-1ZM293 286h1V290h-1ZM294 286h1V291h-1ZM295 288h1V291h-1ZM296 288h1V292h-1ZM297 286h1V292h-1ZM298 286h1V289h-1ZM299 287h1V289h-1ZM300 287h1V293h-1ZM301 289h1V293h-1ZM302 288h1V290h-1ZM303 288h1V290h-1ZM304 288h1V290h-1ZM305 288h1V290h-1ZM306 288h1V290h-1ZM307 288h1V289h-1ZM308 286h1V289h-1ZM309 286h1V289h-1ZM310 288h1V293h-1ZM311 288h1V293h-1ZM312 288h1V290h-1ZM313 288h1V290h-1ZM314 288h1V290h-1ZM315 289h1V290h-1ZM316 287h1V290h-1ZM317 287h1V291h-1ZM318 288h1V291h-1ZM319 287h1V289h-1ZM320 287h1V288h-1ZM321 287h1V288h-1ZM322 287h1V288h-1ZM323 287h1V292h-1ZM324 285h1V292h-1ZM325 285h1V290h-1ZM326 287h1V290h-1ZM327 287h1V289h-1ZM328 288h1V290h-1ZM329 289h1V292h-1ZM330 287h1V292h-1ZM331 287h1V289h-1ZM332 287h1V289h-1ZM333 287h1V290h-1ZM334 289h1V291h-1ZM335 287h1V291h-1ZM336 287h1V288h-1ZM337 286h1V288h-1ZM338 286h1V288h-1ZM339 286h1V288h-1ZM340 286h1V293h-1ZM341 287h1V293h-1ZM342 287h1V289h-1ZM343 288h1V293h-1ZM344 285h1V293h-1ZM345 285h1V292h-1ZM346 289h1V292h-1ZM347 285h1V290h-1ZM348 285h1V287h-1ZM349 286h1V288h-1ZM350 287h1V292h-1ZM351 290h1V292h-1ZM352 285h1V291h-1ZM353 285h1V293h-1ZM354 286h1V293h-1ZM355 286h1V289h-1ZM356 287h1V289h-1ZM357 287h1V289h-1ZM358 285h1V289h-1ZM359 285h1V289h-1ZM360 286h1V289h-1ZM361 286h1V291h-1ZM362 290h1V293h-1ZM363 292h1V293h-1ZM364 286h1V293h-1ZM365 285h1V287h-1ZM366 285h1V289h-1ZM367 286h1V289h-1ZM368 286h1V293h-1ZM369 288h1V293h-1ZM370 287h1V289h-1ZM371 287h1V292h-1ZM372 288h1V292h-1ZM373 285h1V289h-1ZM374 285h1V290h-1ZM375 287h1V290h-1ZM376 287h1V289h-1ZM377 288h1V289h-1ZM378 287h1V289h-1ZM379 287h1V290h-1ZM380 286h1V290h-1ZM381 286h1V288h-1ZM382 287h1V293h-1ZM383 287h1V293h-1ZM384 287h1V290h-1ZM385 285h1V290h-1ZM386 285h1V290h-1ZM387 289h1V290h-1ZM388 285h1V290h-1ZM389 285h1V293h-1ZM390 286h1V293h-1ZM391 286h1V291h-1ZM392 287h1V291h-1ZM393 287h1V290h-1ZM394 289h1V291h-1ZM395 286h1V291h-1ZM396 286h1V293h-1ZM397 285h1V293h-1ZM398 285h1V288h-1ZM399 287h1V291h-1ZM400 285h1V291h-1ZM401 285h1V290h-1ZM402 289h1V291h-1ZM403 290h1V291h-1ZM404 284h1V291h-1ZM405 284h1V292h-1ZM406 291h1V292h-1ZM407 289h1V292h-1ZM408 287h1V290h-1ZM409 287h1V288h-1ZM410 287h1V289h-1ZM411 285h1V289h-1ZM412 285h1V289h-1ZM413 287h1V289h-1ZM414 287h1V289h-1ZM415 288h1V291h-1ZM416 286h1V291h-1ZM417 285h1V287h-1ZM418 285h1V292h-1ZM419 284h1V292h-1ZM420 284h1V289h-1ZM421 287h1V289h-1ZM422 287h1V288h-1ZM423 286h1V288h-1ZM424 286h1V289h-1ZM425 288h1V292h-1ZM426 285h1V292h-1ZM427 285h1V290h-1ZM428 289h1V290h-1ZM429 288h1V290h-1ZM430 288h1V290h-1ZM431 289h1V290h-1ZM432 284h1V290h-1ZM433 284h1V288h-1ZM434 287h1V289h-1ZM435 288h1V289h-1ZM436 288h1V291h-1ZM437 287h1V291h-1ZM438 287h1V288h-1ZM439 287h1V289h-1ZM440 287h1V289h-1ZM441 287h1V289h-1ZM442 288h1V289h-1ZM443 286h1V289h-1ZM444 286h1V287h-1ZM445 286h1V287h-1ZM446 286h1V291h-1ZM447 289h1V291h-1ZM448 289h1V290h-1ZM449 288h1V290h-1ZM450 288h1V289h-1ZM451 286h1V289h-1ZM452 286h1V290h-1ZM453 284h1V290h-1ZM454 284h1V289h-1ZM455 285h1V289h-1ZM456 285h1V290h-1ZM457 285h1V290h-1ZM458 285h1V289h-1ZM459 287h1V289h-1ZM460 287h1V291h-1ZM461 284h1V291h-1ZM462 284h1V287h-1ZM463 286h1V290h-1ZM464 283h1V290h-1ZM465 283h1V290h-1ZM466 284h1V290h-1ZM467 284h1V289h-1ZM468 283h1V289h-1ZM469 283h1V291h-1ZM470 284h1V291h-1ZM471 284h1V287h-1ZM472 286h1V291h-1ZM473 287h1V291h-1ZM474 287h1V291h-1ZM475 286h1V291h-1ZM476 286h1V287h-1ZM477 286h1V288h-1ZM478 287h1V291h-1ZM479 285h1V291h-1ZM480 285h1V289h-1ZM481 287h1V289h-1ZM482 284h1V288h-1ZM483 284h1V289h-1ZM484 285h1V289h-1ZM485 284h1V286h-1ZM486 284h1V290h-1ZM487 286h1V290h-1ZM488 286h1V287h-1ZM489 284h1V287h-1ZM490 283h1V285h-1ZM491 283h1V290h-1ZM492 285h1V290h-1ZM493 283h1V286h-1ZM494 283h1V288h-1ZM495 283h1V288h-1ZM496 283h1V289h-1ZM497 286h1V289h-1ZM498 286h1V288h-1ZM499 286h1V288h-1ZM500 286h1V287h-1ZM501 283h1V287h-1ZM502 283h1V287h-1ZM503 285h1V287h-1ZM504 285h1V287h-1ZM505 286h1V287h-1ZM506 286h1V288h-1ZM507 287h1V290h-1ZM508 282h1V290h-1ZM509 282h1V289h-1ZM510 284h1V289h-1ZM511 284h1V290h-1ZM512 286h1V290h-1ZM513 282h1V287h-1ZM514 282h1V289h-1Z" fill="#ffff00"/><rect x="516" y="222" width="1" height="133" fill="#c8c8c8"/><rect x="61" y="355" width="470" height="1" fill="#000"/><path d="M58 328.5H61 M58 302.5H61 M58 276.5H61 M58 250.5H61 M58 224.5H61" stroke="#000" stroke-width="1"/><text x="55" y="332" text-anchor="end" font-family="Liberation Sans" font-size="11">2</text><text x="55" y="306" text-anchor="end" font-family="Liberation Sans" font-size="11">4</text><text x="55" y="280" text-anchor="end" font-family="Liberation Sans" font-size="11">6</text><text x="55" y="254" text-anchor="end" font-family="Liberation Sans" font-size="11">8</text><text x="55" y="226.5" text-anchor="end" font-family="Liberation Sans" font-size="11">10</text><text x="533" y="332" font-family="Liberation Sans" font-size="11">4</text><text x="533" y="306" font-family="Liberation Sans" font-size="11">8</text><text x="533" y="280" font-family="Liberation Sans" font-size="11">12</text><text x="533" y="254" font-family="Liberation Sans" font-size="11">16</text><text x="533" y="227" font-family="Liberation Sans" font-size="11">20</text><text x="63.0" y="366" text-anchor="middle" font-family="Liberation Sans" font-size="11">0.0</text><text x="115.0" y="366" text-anchor="middle" font-family="Liberation Sans" font-size="11">0.5</text><text x="167.0" y="366" text-anchor="middle" font-family="Liberation Sans" font-size="11">1.0</text><text x="219.0" y="366" text-anchor="middle" font-family="Liberation Sans" font-size="11">1.5</text><text x="271.0" y="366" text-anchor="middle" font-family="Liberation Sans" font-size="11">2.0</text><text x="323.0" y="366" text-anchor="middle" font-family="Liberation Sans" font-size="11">2.5</text><text x="375.0" y="366" text-anchor="middle" font-family="Liberation Sans" font-size="11">3.0</text><text x="427.0" y="366" text-anchor="middle" font-family="Liberation Sans" font-size="11">3.5</text><text x="479.0" y="366" text-anchor="middle" font-family="Liberation Sans" font-size="11">4.0</text><text x="531.0" y="366" text-anchor="middle" font-family="Liberation Sans" font-size="11">4.5</text></svg>

<!-- right panel -->
<div class="btn" style="left:562px;top:59px;width:68px;height:19px"></div>
<div class="t" style="left:583px;top:61px;font-size:12px">開始</div>
<div class="btn" style="left:654px;top:59px;width:67px;height:19px"></div>
<div class="a" style="left:656px;top:61px;width:63px;height:15px;border:1px dotted #800000"></div>
<div class="t" style="left:668px;top:61px;font-size:12px;letter-spacing:-0.5px">終了(<u>X</u>)</div>

<div class="grp" style="left:561px;top:89px;width:162px;height:67px"></div>
<div class="gt" style="left:568px;top:82px;letter-spacing:-2px">ディスク情報</div>
<div class="lab" style="left:569px;top:95px;letter-spacing:-2px">タイプ:</div><div class="val" style="left:617px;top:95px;font-size:11.2px">DVD+R</div>
<div class="lab" style="left:569px;top:110px">ID:</div><div class="val" style="left:617px;top:110px;font-size:10.7px">INFOME R20</div>
<div class="lab" style="left:569px;top:124px">日付:</div><div class="val" style="left:617px;top:124px;font-size:11.2px">21 August 2005</div>
<div class="lab" style="left:569px;top:139px">Label:</div><div class="val" style="left:617px;top:139px;font-size:10.2px">CDS_TEST_B2</div>

<div class="grp" style="left:561px;top:162px;width:162px;height:178px"></div>
<div class="gt" style="left:568px;top:155px">Settings</div>
<div class="lab" style="left:569px;top:173px">転送速度</div>
<div class="txtbox" style="left:631px;top:170px;width:82px;height:20px;border-color:#808080;box-shadow:inset 1px 1px 0 #404040"> 4 X</div>
<div class="a" style="left:696px;top:172px;width:16px;height:16px;background:linear-gradient(#f0f0f0,#a8a8a8);border:1px solid #808080"></div>
<svg style="left:698px;top:175px" width="12" height="10" viewBox="0 0 12 10"><path d="M2 3L6 7L10 3" stroke="#000" stroke-width="2.2" fill="none"/></svg>
<div class="lab" style="left:569px;top:197px">開始</div>
<div class="txtbox" style="left:631px;top:194px;width:70px;height:18px">0000 MB</div>
<div class="lab" style="left:569px;top:220px">終了位置</div>
<div class="txtbox" style="left:631px;top:217px;width:70px;height:18px">4482 MB</div>

<div class="chk" style="left:569px;top:242px"></div><div class="lab" style="left:585px;top:243px;font-size:11.5px">Quick Scan</div>
<div class="chk" style="left:569px;top:261px"><svg width="11" height="11" viewBox="0 0 11 11"><path d="M1 3.5L3.8 6.3L9 1" stroke="#008000" stroke-width="2.6" fill="none"/></svg></div><div class="lab" style="left:585px;top:262px">Show C1/PIE</div>
<div class="chk" style="left:569px;top:276px"><svg width="11" height="11" viewBox="0 0 11 11"><path d="M1 3.5L3.8 6.3L9 1" stroke="#008000" stroke-width="2.6" fill="none"/></svg></div><div class="lab" style="left:585px;top:277px">Show C2/PIF</div>
<div class="chk" style="left:569px;top:291px"><svg width="11" height="11" viewBox="0 0 11 11"><path d="M1 3.5L3.8 6.3L9 1" stroke="#008000" stroke-width="2.6" fill="none"/></svg></div><div class="lab" style="left:585px;top:292px">Show Jitter</div>
<div class="chk" style="left:569px;top:306px"><svg width="11" height="11" viewBox="0 0 11 11"><path d="M1 3.5L3.8 6.3L9 1" stroke="#008000" stroke-width="2.6" fill="none"/></svg></div><div class="lab" style="left:585px;top:307px">Show Read Speed</div>
<div class="chk" style="left:569px;top:321px"><svg width="11" height="11" viewBox="0 0 11 11"><path d="M1 3.5L3.8 6.3L9 1" stroke="#008000" stroke-width="2.6" fill="none"/></svg></div><div class="lab" style="left:585px;top:322px">Show Write Speed</div>

<div class="grp" style="left:561px;top:344px;width:162px;height:24px"></div>
<div class="lab" style="left:569px;top:349px;letter-spacing:-1.5px">品質スコア:</div><div class="val r" style="left:650px;top:349px;width:57px">95</div>

<div class="grp" style="left:561px;top:374px;width:162px;height:63px"></div>
<div class="lab" style="left:569px;top:381px">進行状況:</div><div class="val r" style="left:640px;top:381px;width:67px">100 %</div>
<div class="lab" style="left:569px;top:400px;letter-spacing:-2.5px">ポジション:</div><div class="val r" style="left:640px;top:400px;width:67px">4481 MB</div>
<div class="lab" style="left:569px;top:418px">速度:</div><div class="val r" style="left:640px;top:418px;width:67px">4.17 X</div>

<!-- bottom stats -->
<div class="gbox" style="left:18px;top:374px;width:170px;height:62px"></div>
<div class="a" style="left:26px;top:368px;width:62px;height:12px;background:#fff"></div>
<div class="a" style="left:28px;top:371px;width:8px;height:8px;background:#00ffff;border:1px solid #000"></div>
<div class="lab" style="left:40px;top:368px">PI Errors</div>
<div class="lab" style="left:27px;top:382px">平均:</div><div class="val r" style="left:120px;top:382px;width:56px">7.90</div>
<div class="lab" style="left:27px;top:400px">最大:</div><div class="val r" style="left:120px;top:400px;width:56px">21</div>
<div class="lab" style="left:27px;top:418px">合計 :</div><div class="val r" style="left:120px;top:418px;width:56px">95372</div>

<div class="gbox" style="left:198px;top:374px;width:170px;height:62px"></div>
<div class="a" style="left:206px;top:368px;width:72px;height:12px;background:#fff"></div>
<div class="a" style="left:208px;top:371px;width:8px;height:8px;background:#ff0000;border:1px solid #000"></div>
<div class="lab" style="left:220px;top:368px">PI Failures</div>
<div class="lab" style="left:207px;top:382px">平均:</div><div class="val r" style="left:300px;top:382px;width:58px">0.25</div>
<div class="lab" style="left:207px;top:400px">最大:</div><div class="val r" style="left:300px;top:400px;width:58px">8</div>
<div class="lab" style="left:207px;top:418px">合計 :</div><div class="val r" style="left:300px;top:418px;width:58px">2485</div>

<div class="gbox" style="left:379px;top:374px;width:170px;height:47px"></div>
<div class="a" style="left:387px;top:368px;width:40px;height:12px;background:#fff"></div>
<div class="a" style="left:389px;top:371px;width:8px;height:8px;background:#ffff00;border:1px solid #000"></div>
<div class="lab" style="left:402px;top:368px">Jitter</div>
<div class="lab" style="left:388px;top:382px">平均:</div><div class="val r" style="left:470px;top:382px;width:69px">9.63 %</div>
<div class="lab" style="left:388px;top:400px">最大:</div><div class="val r" style="left:470px;top:400px;width:69px">11.4 %</div>
<div class="lab" style="left:390px;top:423px">PO Failures:</div><div class="val r" style="left:470px;top:423px;width:68px">0</div>

</body></html>
